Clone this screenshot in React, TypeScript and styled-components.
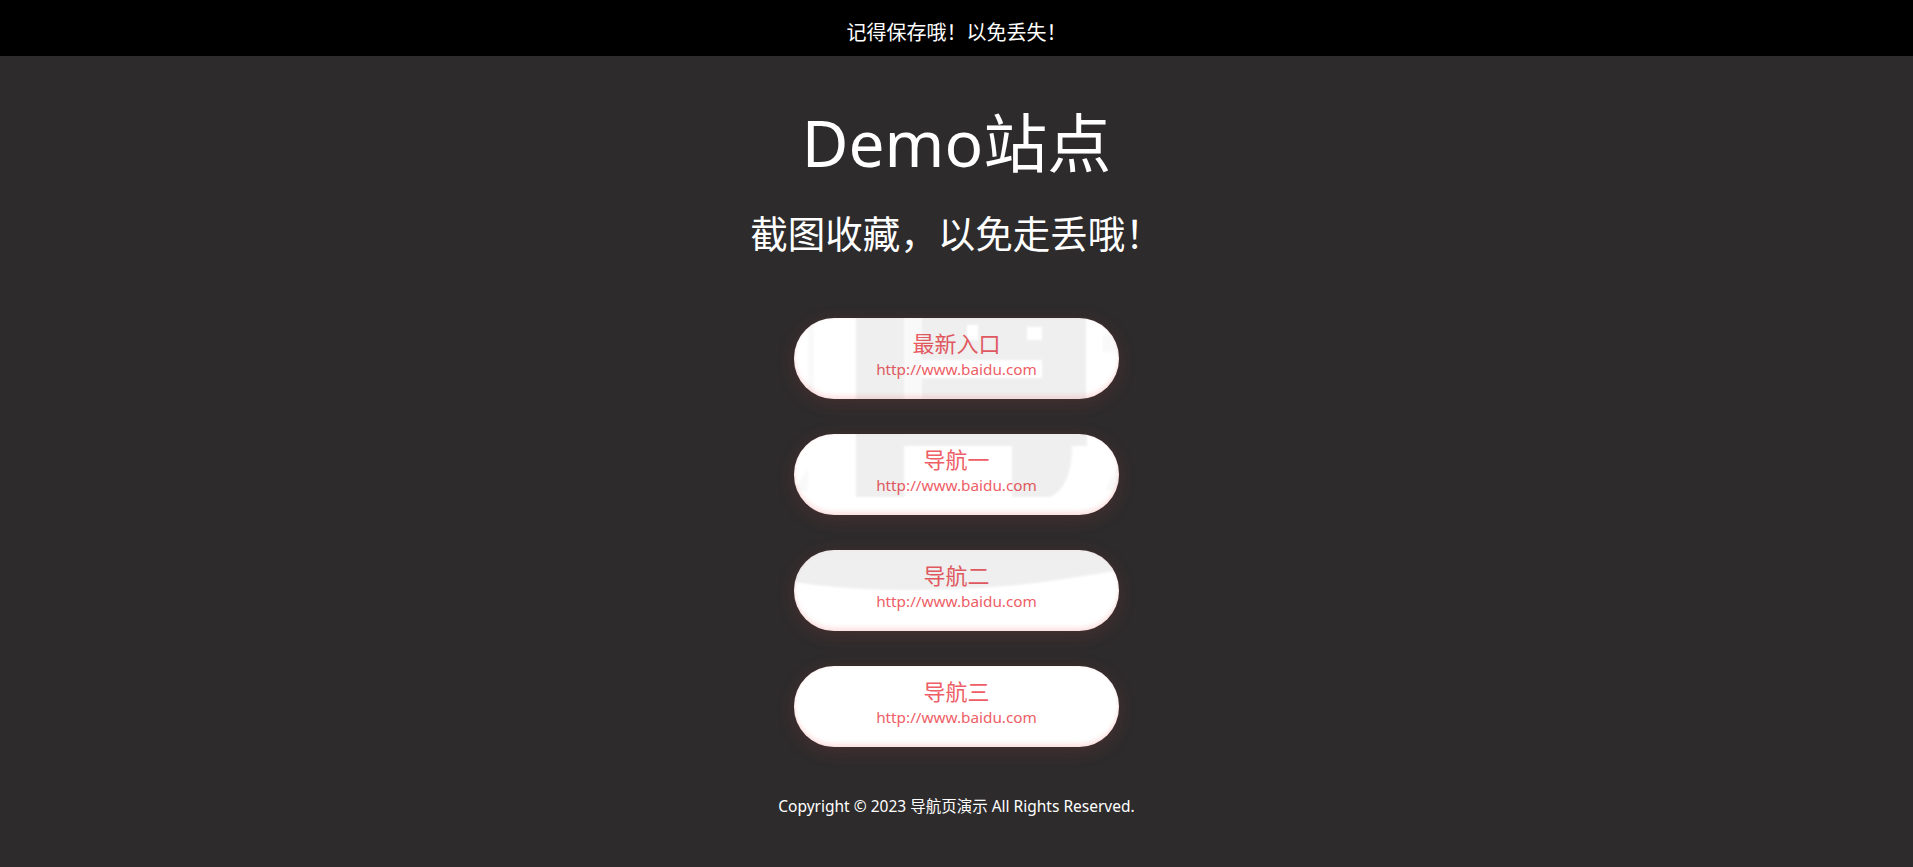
import React from "react";
import styled, { createGlobalStyle } from "styled-components";

const FONT = `"Noto Sans", "Noto Sans CJK SC", sans-serif`;

const Global = createGlobalStyle`
  html, body { margin: 0; padding: 0; background: #2d2b2c; }
  body { font-family: ${FONT}; color: #fff; }
`;

const Page = styled.div`
  position: relative;
  min-height: 867px;
  overflow: hidden;
  display: flex;
  flex-direction: column;
  align-items: center;
`;

const Notice = styled.header`
  align-self: stretch;
  height: 56px;
  box-sizing: border-box;
  padding-top: 9px;
  background: #000;
  display: flex;
  align-items: center;
  justify-content: center;
  font-size: 20px;
  line-height: 1;
`;

const Title = styled.h1`
  margin: 52px 0 0;
  font-size: 64px;
  line-height: 70px;
  font-weight: 400;
  text-align: center;
`;

const Subtitle = styled.h2`
  margin: 34px 0 0;
  font-size: 37.5px;
  line-height: 44px;
  font-weight: 400;
  text-align: center;
`;

const Links = styled.nav`
  margin-top: 62px;
  display: flex;
  flex-direction: column;
  gap: 35px;
`;

const LinkButton = styled.a`
  width: 325px;
  height: 81px;
  box-sizing: border-box;
  padding-top: 10px;
  border-radius: 40px;
  background: #fff;
  color: #ee5e66;
  text-decoration: none;
  display: flex;
  flex-direction: column;
  align-items: center;
  box-shadow: 0 4px 20px rgba(240, 80, 80, 0.14),
    inset 0 -4px 4px rgba(240, 90, 90, 0.14),
    inset 0 0 3px rgba(240, 90, 90, 0.12);
`;

const LinkTitle = styled.span`
  font-size: 22px;
  line-height: 30px;
  margin-bottom: 1px;
`;

const LinkUrl = styled.span`
  font-size: 15.3px;
  line-height: 20px;
`;

const Copyright = styled.footer`
  margin-top: 48px;
  font-size: 15.5px;
  line-height: 22px;
  text-align: center;
`;

const Watermark = styled.svg`
  position: absolute;
  inset: 0;
  width: 1913px;
  height: 867px;
  pointer-events: none;
`;

const links = [
  { title: "最新入口", url: "http://www.baidu.com" },
  { title: "导航一", url: "http://www.baidu.com" },
  { title: "导航二", url: "http://www.baidu.com" },
  { title: "导航三", url: "http://www.baidu.com" },
];

const BUTTON_TOPS = [318, 434, 550];

export default function App() {
  return (
    <Page>
      <Global />
      <Notice>记得保存哦！以免丢失！</Notice>
      <Title>Demo站点</Title>
      <Subtitle>截图收藏，以免走丢哦！</Subtitle>
      <Links>
        {links.map((l) => (
          <LinkButton key={l.title} href="#">
            <LinkTitle>{l.title}</LinkTitle>
            <LinkUrl>{l.url}</LinkUrl>
          </LinkButton>
        ))}
      </Links>
      <Copyright>Copyright © 2023 导航页演示 All Rights Reserved.</Copyright>
      <Watermark viewBox="0 0 1913 867" aria-hidden="true">
        <defs>
          <clipPath id="wm-buttons">
            {BUTTON_TOPS.map((y) => (
              <rect key={y} x="794" y={y} width="325" height="81" rx="40" />
            ))}
          </clipPath>
          <filter id="wm-soft" x="-5%" y="-5%" width="110%" height="110%">
            <feGaussianBlur stdDeviation="1.2" />
          </filter>
        </defs>
        <g clipPath="url(#wm-buttons)">
          <g fill="#000" fillOpacity="0.062" fillRule="evenodd" filter="url(#wm-soft)">
            <rect x="856" y="300" width="48" height="197" />
            <path d="M922 300H1086V399H922ZM1027 327V340H1042V327ZM967 325V340H978V325ZM922 360V378H1042V360Z" />
            <path d="M904 434H1087V446H1072C1072 470 1066 490 1050 497H1012V446H904Z" />
            <path d="M794 550H1120V570C1050 582 1000 590 900 590C860 590 820 586 794 582Z" />
          </g>
          <g fill="#000" fillOpacity="0.025" filter="url(#wm-soft)">
            <rect x="904" y="318" width="18" height="81" />
            <rect x="808" y="318" width="6" height="81" />
            <rect x="1103" y="334" width="16" height="18" />
            <path d="M1105 490L1120 462V492Z" />
            <path d="M794 490L808 468V492Z" />
          </g>
        </g>
      </Watermark>
    </Page>
  );
}
